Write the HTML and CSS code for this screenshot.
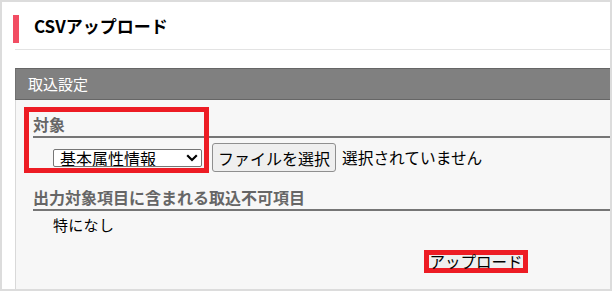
FILE: index.html
```html
<!DOCTYPE html>
<html lang="ja">
<head>
<meta charset="utf-8">
<title>CSVアップロード</title>
<link rel="stylesheet" href="styles.css">
</head>
<body>
<div class="frame">
  <div class="title">
    <span class="title-bar"></span>
    <h1>CSVアップロード</h1>
  </div>
  <div class="sep"></div>
  <section class="panel">
    <div class="panel-head">取込設定</div>
    <div class="panel-body">
      <h2 class="sub">対象</h2>
      <div class="row">
        <div class="select-wrap">
          <select class="select">
            <option>基本属性情報</option>
          </select>
          <svg class="chev" width="12" height="8" viewBox="0 0 12 8"><path d="M1.2 1.3 L6 6 L10.8 1.3" fill="none" stroke="#000" stroke-width="2.2"/></svg>
        </div>
        <button class="file-btn" type="button">ファイルを選択</button>
        <span class="file-name">選択されていません</span>
      </div>
      <h2 class="sub sub2">出力対象項目に含まれる取込不可項目</h2>
      <p class="none">特になし</p>
      <div class="actions">
        <button class="upload-btn" type="button">アップロード</button>
      </div>
    </div>
  </section>
  <div class="mark"></div>
</div>
</body>
</html>
```
FILE: styles.css
```css
* { box-sizing: border-box; }
html, body { margin: 0; padding: 0; }
body {
  font-family: "Noto Sans CJK JP", "Noto Sans", sans-serif;
  background: #fff;
}
.frame {
  position: relative;
  width: 612px;
  height: 291px;
  border: 2px solid #dcdcdc;
  background: #fff;
  overflow: hidden;
  padding-top: 13px;
}
.title {
  display: flex;
  align-items: flex-start;
  gap: 15px;
  margin-left: 11px;
  height: 28px;
}
.title-bar {
  width: 6px;
  height: 28px;
  background: #f24d63;
  flex: none;
}
.title h1 {
  margin: 0;
  font-size: 17px;
  line-height: 22px;
  font-weight: 700;
  color: #000;
}
.sep {
  margin: 6px 0 0 13px;
  border-top: 1px solid #e3e3e3;
}
.panel {
  margin: 18px 0 0 13px;
}
.panel-head {
  height: 32px;
  background: #808080;
  border-top: 1px solid #666;
  border-bottom: 1px solid #666;
  border-left: 1px solid #707070;
  color: #fff;
  font-size: 15px;
  line-height: 30px;
  padding-left: 12px;
}
.panel-body {
  background: #f7f7f7;
  border-left: 1px solid #d9d9d9;
  height: 200px;
  padding: 0 0 0 17px;
}
.sub {
  margin: 0;
  padding-top: 14px;
  padding-bottom: 2px;
  font-size: 16px;
  line-height: 20px;
  font-weight: 700;
  color: #666;
  border-bottom: 2px solid #767676;
}
.sub2 {
  padding-top: 0;
  margin-top: 15px;
}
.row {
  display: flex;
  align-items: center;
  margin: 5px 0 0 20px;
  height: 29px;
}
.select-wrap {
  position: relative;
  display: flex;
}
.select {
  appearance: none;
  -webkit-appearance: none;
  width: 149px;
  height: 18px;
  margin: 1px 0 0 0;
  padding: 0 0 0 6px;
  border: 1px solid #767676;
  border-radius: 2px;
  background: #fff;
  font-family: "Noto Sans CJK JP", sans-serif;
  font-size: 16px;
  line-height: 16px;
  color: #000;
}
.chev {
  position: absolute;
  left: 133px;
  top: 6px;
  pointer-events: none;
}
.file-btn {
  margin-left: 10px;
  height: 29px;
  padding: 0 5px;
  border: 1px solid #8f8f8f;
  border-radius: 3px;
  background: #efefef;
  font-family: "Noto Sans CJK JP", sans-serif;
  font-size: 16px;
  color: #000;
  white-space: nowrap;
}
.file-name {
  margin-left: 6px;
  font-size: 15.7px;
  color: #000;
  white-space: nowrap;
}
.none {
  margin: 4px 0 0 20px;
  font-size: 15px;
  letter-spacing: 0.3px;
  line-height: 20px;
  color: #000;
}
.actions {
  display: flex;
  margin-top: 15px;
  padding-left: 391px;
}
.upload-btn {
  width: 104px;
  height: 23px;
  padding: 0;
  border: 5px solid #ed1c24;
  background: #efefef;
  font-family: "Noto Sans CJK JP", sans-serif;
  font-size: 15.5px;
  line-height: 13px;
  color: #000;
  white-space: nowrap;
  overflow: visible;
}
.mark {
  position: absolute;
  left: 22px;
  top: 105px;
  width: 185px;
  height: 66px;
  border: 5px solid #ed1c24;
  pointer-events: none;
}
```
